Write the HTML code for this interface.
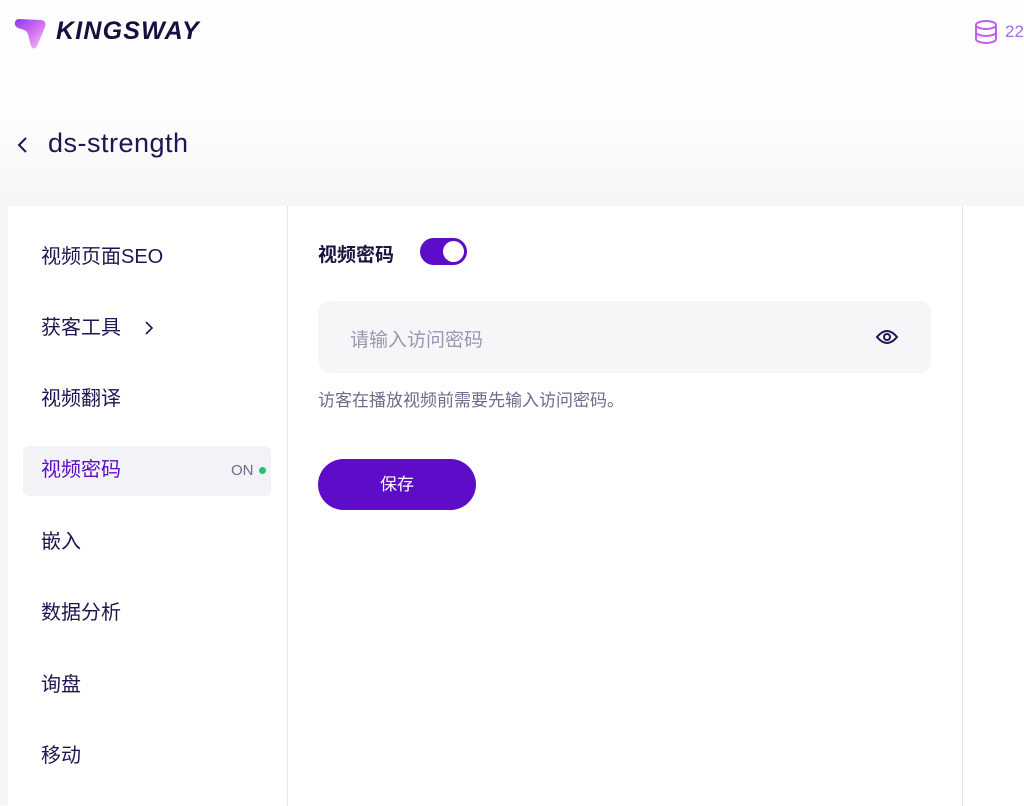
<!DOCTYPE html>
<html><head><meta charset="utf-8"><style>
*{margin:0;padding:0;box-sizing:border-box}
body{width:1024px;height:805px;overflow:hidden;background:linear-gradient(#fefefe 0,#fdfdfd 120px,#f6f6f7 206px);font-family:"Liberation Sans","Noto Sans CJK SC",sans-serif;color:#1e1650;position:relative}
.abs{position:absolute}
.logo{left:56px;top:17px;font-size:25px;font-weight:bold;font-style:italic;letter-spacing:1.2px;color:#15103d}
.coin{left:974px;top:20px}
.coinnum{left:1005px;top:22px;font-size:17px;color:#a46be0}
.title{left:48px;top:128px;font-size:27px;letter-spacing:0.5px;color:#1e1650}
.panel{left:8px;top:206px;width:1016px;height:600px;background:#fff}
.nav{left:8px;top:206px;width:280px;height:600px;border-right:1px solid #e6e6ea}
.vline{left:962px;top:206px;width:1px;height:600px;background:#e4e4e8}
.item{position:absolute;left:41px;font-size:20px;color:#1e1650;line-height:24px}
.active{left:23px;top:446px;width:248px;height:50px;background:#f3f3f7;border-radius:6px}
.label{left:318px;top:240px;font-size:19px;font-weight:bold;color:#1a1440}
.tog{left:420px;top:238px;width:47px;height:27px;border-radius:14px;background:#5d0cc8}
.tog i{position:absolute;right:3px;top:3px;width:21px;height:21px;border-radius:50%;background:#fff}
.input{left:318px;top:301px;width:613px;height:72px;background:#f6f6f8;border-radius:12px}
.ph{left:350px;top:325px;font-size:19px;color:#9a95b0}
.help{left:318px;top:386px;font-size:17px;color:#6f6a8a}
.btn{left:318px;top:459px;width:158px;height:51px;border-radius:26px;background:#5d0cc8;color:#fff;font-size:17px;text-align:center;line-height:51px}
</style></head><body>
<svg class="abs" style="left:14px;top:17px" width="34" height="34" viewBox="0 0 34 34"><defs><linearGradient id="g" x1="0" y1="0" x2="1" y2="1"><stop offset="0" stop-color="#8a3cf0"/><stop offset="0.5" stop-color="#d26cf0"/><stop offset="1" stop-color="#f0c8f4"/></linearGradient></defs><path d="M5 2 L27 3 Q33 4 31 10 L23 29 Q20 34 17 29 L14 17 Q13 14 10 13 L4 11 Q0 9 1 5 Q2 2 5 2Z" fill="url(#g)"/></svg>
<div class="abs logo">KINGSWAY</div>
<svg class="abs coin" width="24" height="24" viewBox="0 0 24 24" fill="none" stroke="#c35cf0" stroke-width="2"><ellipse cx="12" cy="5" rx="10" ry="4"/><path d="M2 5v14c0 2.2 4.5 4 10 4s10-1.8 10-4V5"/><path d="M2 12c0 2.2 4.5 4 10 4s10-1.8 10-4"/></svg>
<div class="abs coinnum">22</div>
<svg class="abs" style="left:16px;top:135px" width="14" height="20" viewBox="0 0 14 20" fill="none" stroke="#1e1650" stroke-width="2"><path d="M10 3 L3 10 L10 17"/></svg>
<div class="abs title">ds-strength</div>
<div class="abs panel"></div>
<div class="abs nav"></div>
<div class="abs vline"></div>
<div class="abs active"></div>
<div class="item" style="top:245px">视频页面SEO</div>
<div class="item" style="top:316px">获客工具</div>
<svg class="abs" style="left:144px;top:320px" width="10" height="16" viewBox="0 0 10 16" fill="none" stroke="#1e1650" stroke-width="1.6"><path d="M2 2 L8 8 L2 14"/></svg>
<div class="item" style="top:387px">视频翻译</div>
<div class="item" style="top:458px;color:#5d0cc8">视频密码</div>
<div class="abs" style="left:231px;top:462px;font-size:15px;color:#6f6a8a">ON</div>
<div class="abs" style="left:259px;top:467px;width:7px;height:7px;border-radius:50%;background:#1ec46f"></div>
<div class="item" style="top:530px">嵌入</div>
<div class="item" style="top:601px">数据分析</div>
<div class="item" style="top:673px">询盘</div>
<div class="item" style="top:744px">移动</div>
<div class="abs label">视频密码</div>
<div class="abs tog"><i></i></div>
<div class="abs input"></div>
<div class="abs ph">请输入访问密码</div>
<svg class="abs" style="left:875px;top:327px" width="24" height="20" viewBox="0 0 24 20" fill="none" stroke="#1e1650" stroke-width="2"><path d="M2 10 Q12 -2 22 10 Q12 22 2 10Z"/><circle cx="12" cy="10" r="3"/></svg>
<div class="abs help">访客在播放视频前需要先输入访问密码。</div>
<div class="abs btn">保存</div>
</body></html>
